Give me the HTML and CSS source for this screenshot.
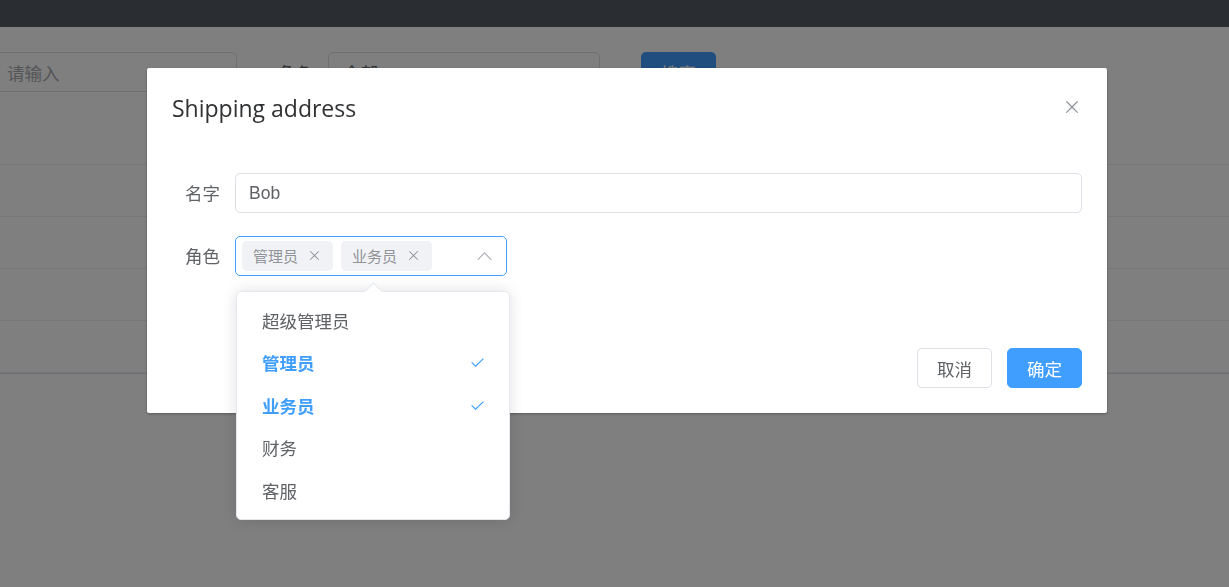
FILE: index.html
```html
<!DOCTYPE html>
<html lang="zh-cn">

<head>
    <meta charset="UTF-8">
    <meta name="viewport" content="width=device-width, initial-scale=1.0">
    <title>用户管理</title>
    <link rel="stylesheet" href="styles.css">
</head>

<body>

    <!-- 背景页面 -->
    <div class="page">
        <div class="topbar"></div>
        <div class="search">
            <div class="search-item">
                <input class="bg-input" type="text" placeholder="请输入">
            </div>
            <div class="search-item">
                <span class="bg-label">角色</span>
                <div class="bg-select">
                    <span>全部</span>
                    <svg class="bg-arrow" viewBox="0 0 1024 1024"><path d="M831.872 340.864 512 652.672 192.128 340.864a30.592 30.592 0 0 0-42.752 0 29.12 29.12 0 0 0 0 41.6L489.664 714.24a32 32 0 0 0 44.672 0l340.288-331.712a29.12 29.12 0 0 0 0-41.728 30.592 30.592 0 0 0-42.752 0z" /></svg>
                </div>
            </div>
            <button class="bg-btn">搜索</button>
        </div>
        <div class="table">
            <div class="tr th"></div>
            <div class="tr"></div>
            <div class="tr"></div>
            <div class="tr"></div>
            <div class="tr"></div>
        </div>
    </div>

    <!-- 弹窗 -->
    <div class="overlay">
        <div class="dialog">
            <div class="dialog-header">
                <span class="dialog-title">Shipping address</span>
                <button class="dialog-close">
                    <svg viewBox="0 0 1024 1024"><path d="M764.288 214.592 512 466.88 259.712 214.592a31.936 31.936 0 0 0-45.12 45.12L466.752 512 214.528 764.224a31.936 31.936 0 1 0 45.12 45.184L512 557.184l252.288 252.288a31.936 31.936 0 0 0 45.12-45.12L557.12 512.064l252.288-252.352a31.936 31.936 0 1 0-45.120-45.184z" /></svg>
                </button>
            </div>

            <div class="dialog-body">
                <div class="form-item">
                    <label class="form-label">名字</label>
                    <div class="form-content">
                        <input class="input" type="text" value="Bob">
                    </div>
                </div>
                <div class="form-item">
                    <label class="form-label">角色</label>
                    <div class="form-content">
                        <div class="select is-focus">
                            <span class="tag">管理员<i class="tag-close"><svg viewBox="0 0 1024 1024"><path d="M764.288 214.592 512 466.88 259.712 214.592a31.936 31.936 0 0 0-45.12 45.12L466.752 512 214.528 764.224a31.936 31.936 0 1 0 45.12 45.184L512 557.184l252.288 252.288a31.936 31.936 0 0 0 45.12-45.12L557.12 512.064l252.288-252.352a31.936 31.936 0 1 0-45.12-45.184z" /></svg></i></span>
                            <span class="tag">业务员<i class="tag-close"><svg viewBox="0 0 1024 1024"><path d="M764.288 214.592 512 466.88 259.712 214.592a31.936 31.936 0 0 0-45.12 45.12L466.752 512 214.528 764.224a31.936 31.936 0 1 0 45.12 45.184L512 557.184l252.288 252.288a31.936 31.936 0 0 0 45.12-45.12L557.12 512.064l252.288-252.352a31.936 31.936 0 1 0-45.12-45.184z" /></svg></i></span>
                            <svg class="select-arrow" viewBox="0 0 1024 1024"><path d="m488.832 344.32-339.84 356.672a32 32 0 0 0 0 44.16l.384.384a29.44 29.44 0 0 0 42.688 0l320-335.872 319.872 335.872a29.44 29.44 0 0 0 42.688 0l.384-.384a32 32 0 0 0 0-44.16L535.168 344.32a32 32 0 0 0-46.336 0z" /></svg>

                            <!-- 下拉菜单 -->
                            <div class="dropdown">
                                <ul>
                                    <li>超级管理员</li>
                                    <li class="selected">管理员<svg class="check" viewBox="0 0 13 9"><polyline points="0.6,4.4 4.6,8.2 12.4,0.6" /></svg></li>
                                    <li class="selected">业务员<svg class="check" viewBox="0 0 13 9"><polyline points="0.6,4.4 4.6,8.2 12.4,0.6" /></svg></li>
                                    <li>财务</li>
                                    <li>客服</li>
                                </ul>
                            </div>
                        </div>
                    </div>
                </div>
            </div>

            <div class="dialog-footer">
                <button class="btn">取消</button>
                <button class="btn btn-primary">确定</button>
            </div>
        </div>
    </div>

</body>

</html>
```

FILE: styles.css
```css
* {
    padding: 0;
    margin: 0;
    box-sizing: border-box;
}

ul {
    list-style: none;
}

body {
    font-family: "Noto Sans CJK SC", sans-serif;
    background-color: #fff;
    overflow: hidden;
}

button,
input {
    font-family: inherit;
    outline: none;
}

/* 背景页面 */
.topbar {
    height: 27px;
    background-color: #545c64;
}

.search {
    display: flex;
    margin: 25px 0 0 -8px;
}

.search-item {
    display: flex;
    align-items: center;
    margin-right: 41px;
}

.bg-input {
    width: 245px;
    height: 40px;
    border: 1px solid #dcdfe6;
    border-radius: 5px;
    padding-left: 14px;
    font-size: 17.5px;
    color: #606266;
}

.bg-input::placeholder {
    color: #a8abb2;
}

.bg-label {
    font-size: 17.5px;
    color: #606266;
    margin-right: 15px;
}

.bg-select {
    width: 272px;
    height: 40px;
    border: 1px solid #dcdfe6;
    border-radius: 5px;
    padding: 0 12px 0 14px;
    display: flex;
    align-items: center;
    justify-content: space-between;
    font-size: 17.5px;
    color: #606266;
}

.bg-arrow {
    width: 18px;
    height: 18px;
    fill: #a8abb2;
}

.bg-btn {
    width: 75px;
    height: 40px;
    border: 0;
    border-radius: 5px;
    background-color: #409eff;
    color: #fff;
    font-size: 17.5px;
}

.table {
    margin-top: 22.5px;
    border-bottom: 1px solid #dcdfe6;
}

.tr {
    height: 52px;
    border-bottom: 1px solid #ebeef5;
}

.tr.th {
    height: 50px;
}

/* 遮罩 & 弹窗 */
.overlay {
    position: fixed;
    top: 0;
    left: 0;
    right: 0;
    bottom: 0;
    background-color: rgba(0, 0, 0, .5);
}

.dialog {
    width: 960px;
    margin: 68px 0 0 147px;
    background-color: #fff;
    border-radius: 2px;
    box-shadow: 0 1px 3px rgba(0, 0, 0, .3);
}

.dialog-header {
    display: flex;
    align-items: center;
    justify-content: space-between;
    padding: 25px 25px 12.5px;
}

.dialog-title {
    font-family: "Open Sans", "Noto Sans CJK SC", sans-serif;
    font-size: 23px;
    line-height: 30px;
    color: #303133;
}

.dialog-close {
    width: 20px;
    height: 20px;
    border: 0;
    background: none;
    margin-top: -2px;
}

.dialog-close svg {
    width: 20px;
    height: 20px;
    fill: #909399;
    display: block;
}

.dialog-body {
    padding: 37.5px 25px;
}

.form-item {
    display: flex;
    margin-bottom: 22.5px;
}

.form-label {
    width: 63px;
    padding-right: 15px;
    text-align: right;
    font-size: 17.5px;
    line-height: 40px;
    color: #606266;
}

.form-content {
    flex: 1;
}

.input {
    width: 100%;
    height: 40px;
    border: 1px solid #dcdfe6;
    border-radius: 5px;
    padding-left: 13px;
    font-family: "Liberation Sans", Arial, sans-serif;
    font-size: 17.5px;
    color: #606266;
}

.select {
    position: relative;
    width: 272px;
    height: 40px;
    border: 1px solid #dcdfe6;
    border-radius: 5px;
    display: flex;
    align-items: center;
    padding-left: 6px;
}

.select.is-focus {
    border-color: #409eff;
}

.tag {
    display: flex;
    align-items: center;
    height: 30px;
    padding: 0 11px;
    margin-right: 8px;
    background-color: #f0f2f5;
    border-radius: 5px;
    font-size: 15px;
    color: #909399;
}

.tag-close {
    width: 15px;
    height: 15px;
    margin-left: 9px;
}

.tag-close svg {
    display: block;
    width: 15px;
    height: 15px;
    fill: #909399;
}

.select-arrow {
    width: 19px;
    height: 19px;
    margin-left: auto;
    margin-right: 12px;
    fill: #a8abb2;
}

/* 下拉菜单 */
.dropdown {
    position: absolute;
    top: calc(100% + 16px);
    left: 0;
    width: 274px;
    background-color: #fff;
    border: 1px solid #e4e7ed;
    border-radius: 5px;
    box-shadow: 0 0 15px rgba(0, 0, 0, .12);
    z-index: 10;
}

.dropdown::before {
    content: "";
    position: absolute;
    top: -7px;
    left: 130px;
    width: 12px;
    height: 12px;
    background-color: #fff;
    border-top: 1px solid #e4e7ed;
    border-left: 1px solid #e4e7ed;
    transform: rotate(45deg);
}

.dropdown ul {
    position: relative;
    padding: 7.5px 0;
}

.dropdown li {
    display: flex;
    align-items: center;
    justify-content: space-between;
    height: 42.5px;
    padding: 0 25px 0 25px;
    font-size: 17.5px;
    color: #606266;
}

.dropdown li.selected {
    color: #409eff;
    font-weight: 700;
}

.check {
    width: 13px;
    height: 9px;
    fill: none;
    stroke: #409eff;
    stroke-width: 1.2;
}

.dialog-footer {
    display: flex;
    justify-content: flex-end;
    padding: 12.5px 25px 25px;
}

.btn {
    width: 75px;
    height: 40px;
    margin-left: 15px;
    border: 1px solid #dcdfe6;
    border-radius: 5px;
    background-color: #fff;
    font-size: 17.5px;
    color: #606266;
}

.btn-primary {
    background-color: #409eff;
    border-color: #409eff;
    color: #fff;
}
```
